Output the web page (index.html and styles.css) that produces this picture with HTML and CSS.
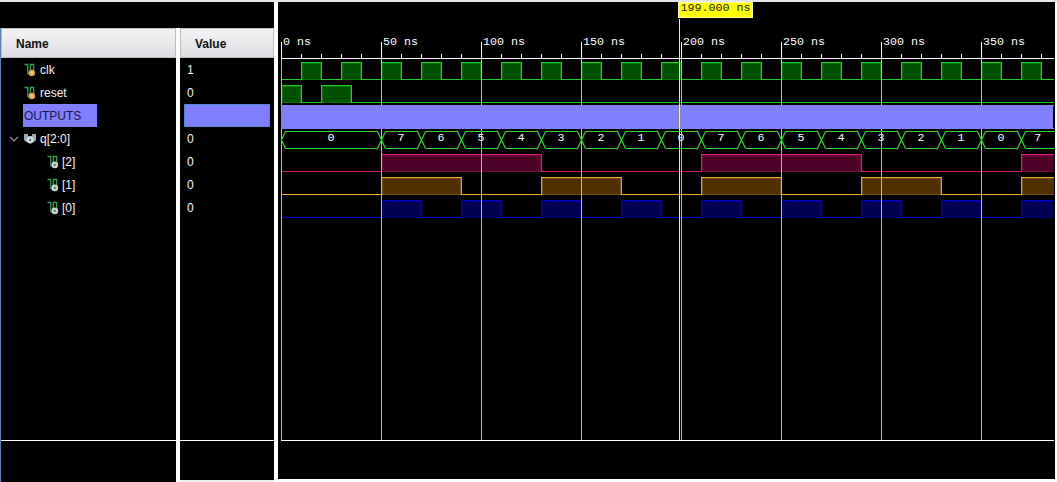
FILE: index.html
```
<!DOCTYPE html>
<html lang="en">
<head>
<meta charset="utf-8">
<title>Waveform viewer</title>
<link rel="stylesheet" href="styles.css">
</head>
<body>
<svg class="defs" aria-hidden="true">
  <symbol id="wire" viewBox="0 0 12 14">
    <path d="M.5 1.5H3.8V10.5H6.4V1.5H9.6V8" fill="none" stroke="#34a04c" stroke-width="1.3"/>
  </symbol>
  <symbol id="sig" viewBox="0 0 12 14">
    <use href="#wire"/>
    <circle cx="7.8" cy="9.9" r="3.2" fill="#e8a44e"/><circle cx="7.8" cy="9.9" r="1.4" fill="#ffd08a"/>
  </symbol>
  <symbol id="bit" viewBox="0 0 12 14">
    <use href="#wire"/>
    <circle cx="7.8" cy="9.9" r="3.3" fill="#d0d0d0"/><circle cx="7.8" cy="9.9" r="1.1" fill="#666"/>
  </symbol>
  <symbol id="bus" viewBox="0 0 12 14">
    <path d="M0 2H4V4H8V2H12V8L10 10H2L0 8Z" fill="#8fadbc"/>
    <circle cx="6.2" cy="8" r="3.4" fill="#dadada"/><circle cx="6.2" cy="8" r="1.2" fill="#666"/>
  </symbol>
</svg>
<main class="viewer">
  <section class="signals">
    <div class="column names">
      <h2 class="head">Name</h2>
      <ul class="rows">
        <li class="row top"><svg class="icon"><use href="#sig"/></svg><span>clk</span></li>
        <li class="row top"><svg class="icon"><use href="#sig"/></svg><span>reset</span></li>
        <li class="row divider"><span class="mark">OUTPUTS</span></li>
        <li class="row group"><svg class="chevron" viewBox="0 0 10 6"><path d="M1 .8L5 4.8L9 .8"/></svg><svg class="icon"><use href="#bus"/></svg><span>q[2:0]</span></li>
        <li class="row child"><svg class="icon"><use href="#bit"/></svg><span>[2]</span></li>
        <li class="row child"><svg class="icon"><use href="#bit"/></svg><span>[1]</span></li>
        <li class="row child"><svg class="icon"><use href="#bit"/></svg><span>[0]</span></li>
      </ul>
      <div class="foot"></div>
    </div>
    <div class="column values">
      <h2 class="head">Value</h2>
      <ul class="rows">
        <li class="row"><span>1</span></li>
        <li class="row"><span>0</span></li>
        <li class="row fill"></li>
        <li class="row"><span>0</span></li>
        <li class="row"><span>0</span></li>
        <li class="row"><span>0</span></li>
        <li class="row"><span>0</span></li>
      </ul>
      <div class="foot short"></div>
    </div>
  </section>
  <svg class="waves" id="waves" width="777" height="477" viewBox="278 2 777 477"></svg>
</main>
<script src="waves.js"></script>
</body>
</html>
```
FILE: styles.css
```
* { box-sizing: border-box; }
body {
  margin: 0;
  width: 1057px;
  height: 482px;
  overflow: hidden;
  background: #fff;
  font: 12px "Liberation Sans", Arial, sans-serif;
  color: #f4f4f4;
}
.defs { display: none; }
.viewer {
  display: flex;
  gap: 4px;
  height: 482px;
  border-top: 2px solid #e4e7ea;
}
.signals {
  display: grid;
  grid-template-columns: 176px 94px;
  column-gap: 4px;
  width: 274px;
  height: 480px;
  border-top: 26px solid #000;
  background: #fff;
}
.column { display: flex; flex-direction: column; height: 454px; background: #000; }
.names { border-left: 1px solid #5b82ae; }
.head {
  flex: none;
  height: 30px;
  margin: 0;
  padding-left: 14px;
  border: 1px solid #bdbdbf;
  background: linear-gradient(#f3f3f5, #dedee2);
  color: #111;
  font-size: 12px;
  font-weight: bold;
  line-height: 30px;
}
.rows { flex: 1; margin: 0; padding: 0; list-style: none; }
.row { display: flex; height: 23px; line-height: 24px; }
.top { padding-left: 23px; }
.group { padding-left: 8px; }
.child { padding-left: 46px; }
.divider { padding-left: 22px; }
.icon { flex: none; width: 12px; height: 14px; margin: 5px 4px 0 0; }
.child .icon { margin-right: 3px; }
.chevron { width: 10px; height: 6px; margin: 9px 5px 0 0; }
.chevron path { fill: none; stroke: #999; stroke-width: 1.2; }
.mark { width: 74px; height: 23px; padding-left: 1px; background: #8080ff; color: #181848; }
.values .row { padding-left: 7px; }
.values .fill { width: 86px; margin-left: 4px; background: #8080ff; border: 1px solid #4e86d4; }
.foot { height: 42px; border-top: 1px solid #fff; }
.short { border-bottom: 2px solid #eee; }
.waves { flex: none; background: #000; box-shadow: 0 3px 0 #fff; }
.label { font: 11.67px "Liberation Mono", "Courier New", monospace; fill: #fff; }
.digit { text-anchor: middle; }
.axis { stroke: #fff; }
.grid { stroke: #b9b9b9; }
.bar { fill: #8080ff; }
.bus { fill: none; stroke: #35d435; stroke-width: 1.2; }
.flag { fill: #ff0; stroke: #ffffa0; }
.flag-text { fill: #222200; }
.cursor { stroke: #ffff30; }
.cursor-shade { stroke: #8a8a60; }
.low, .high, .inner { fill: none; }
.clk, .reset { stroke: #1cd01c; fill: #005000; }
.q2 { stroke: #e0187a; fill: #4d0028; }
.q1 { stroke: #e8a030; fill: #503000; }
.q0 { stroke: #0000dc; fill: #000050; }
.body { stroke: none; }
.inner { stroke-opacity: .28; }
.q2 .low { stroke: #c8206c; }
.crisp { shape-rendering: crispEdges; }
```
FILE: waves.js
```
const svg = document.getElementById("waves");
const END = 386.5;
const EDGE = 1054;
const px = t => 281.5 + 2 * t;

function add(parent, tag, attrs, text) {
  const el = document.createElementNS("http://www.w3.org/2000/svg", tag);
  for (const key in attrs) el.setAttribute(key, attrs[key]);
  if (text !== undefined) el.textContent = text;
  parent.appendChild(el);
  return el;
}

const crisp = add(svg, "g", { class: "crisp" });

// A digital trace: highs is a list of [start, end] times in ns.
function trace(name, top, highs) {
  const g = add(crisp, "g", { class: name });
  const y1 = top + 0.5, y0 = top + 17.5;
  let t = 0;
  for (const [a, b] of highs) {
    const cut = b > END;
    const x1 = px(a), x2 = cut ? EDGE : px(b);
    if (a > t) add(g, "path", { class: "low", d: `M${px(t)} ${y0}H${x1}` });
    add(g, "rect", { class: "body", x: x1 + 0.5, y: top + 1, width: x2 - x1 - 0.5, height: 17 });
    add(g, "path", { class: "inner", d: `M${x1 + 1} ${y0}V${y1 + 1}H${x2 - 1}` + (cut ? "" : `V${y0}`) });
    add(g, "path", { class: "inner", d: `M${x1} ${y0}H${x2}` });
    add(g, "path", { class: "high", d: `M${x1} ${top + 18}V${y1}H${x2}` + (cut ? "" : `V${top + 18}`) });
    t = Math.min(b, END);
  }
  if (t < END) add(g, "path", { class: "low", d: `M${px(t)} ${y0}H${EDGE}` });
}

const every = (first, step, width) => {
  const out = [];
  for (let t = first; t < END; t += step) out.push([t, t + width]);
  return out;
};

trace("clk", 62, every(10, 20, 10));
trace("reset", 85, [[0, 10], [20, 35]]);
trace("q2", 154, every(50, 160, 80));
trace("q1", 177, every(50, 80, 40));
trace("q0", 200, every(50, 40, 20));

for (let t = 0; t <= 350; t += 50) {
  add(crisp, "path", { class: "grid", d: `M${px(t)} 59V440` });
}
for (let t = 0; t < END; t += 10) {
  add(crisp, "path", { class: "axis", d: `M${px(t)} ${t % 50 ? 54 : 42}V59` });
}
for (let t = 0; t <= 350; t += 50) {
  add(svg, "text", { class: "label", x: px(t) + 1.5, y: 45 }, `${t} ns`);
}
add(crisp, "path", { class: "axis", d: "M281 58.5H1054M281 440.5H1054" });
add(crisp, "rect", { class: "bar", x: 281, y: 105, width: 773, height: 24 });
add(crisp, "path", { d: "M1053.5 106V128", stroke: "#000" });

const changes = [0];
for (let t = 50; t < END; t += 20) changes.push(t);
changes.forEach((a, i) => {
  const last = i === changes.length - 1;
  const x1 = px(a), x2 = last ? 1055 : px(changes[i + 1]);
  const right = last ? `M${x1 + 4} 131.5H1055M${x1 + 4} 148.5H1055`
    : `M${x1 + 4} 131.5H${x2 - 4}L${x2} 140L${x2 - 4} 148.5H${x1 + 4}`;
  add(svg, "path", { class: "bus", d: `M${x1 + 4} 131.5L${x1} 140L${x1 + 4} 148.5${right}` });
  const value = i === 0 ? 0 : 7 - (i - 1) % 8;
  add(svg, "text", { class: "label digit", x: (x1 + x2) / 2 - 0.5, y: 141 }, value);
});

add(svg, "path", { class: "cursor crisp", d: "M679.5 19V440" });
add(svg, "path", { class: "cursor-shade crisp", d: "M678.5 105V129" });
add(svg, "rect", { class: "flag crisp", x: 678.5, y: 2.5, width: 74, height: 15 });
add(svg, "text", { class: "label flag-text", x: 680.5, y: 11 }, "199.000 ns");
```
